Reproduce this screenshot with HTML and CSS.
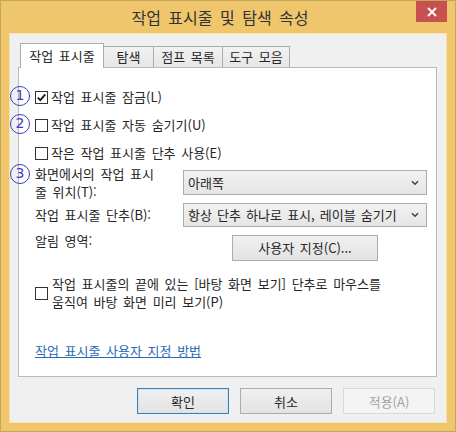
FILE: index.html
```html
<!DOCTYPE html>
<html lang="ko">
<head>
  <meta charset="UTF-8" />
  <title>작업 표시줄 및 탐색 속성</title>
  <link rel="stylesheet" href="styles.css">
</head>
<body>
  <div class="window">
    <div class="titlebar">
      <div class="title">작업 표시줄 및 탐색 속성</div>
      <div class="close">
        <svg width="10" height="10" viewBox="0 0 10 10"><path d="M1 1 L9 9 M9 1 L1 9" stroke="#fff" stroke-width="1.8"/></svg>
      </div>
    </div>

    <div class="client">
      <div class="tabs">
        <div class="tab active t1">작업 표시줄</div>
        <div class="tab t2">탐색</div>
        <div class="tab t3">점프 목록</div>
        <div class="tab t4">도구 모음</div>
      </div>

      <div class="panel">
        <div class="check row1">
          <span class="mark">1</span>
          <span class="box">
            <svg width="11" height="11" viewBox="0 0 11 11"><path d="M1.8 5.6 L4.3 8.2 L9.3 2.4" fill="none" stroke="#1a1a1a" stroke-width="1.9"/></svg>
          </span>
          <span>작업 표시줄 잠금(L)</span>
        </div>
        <div class="check row2">
          <span class="mark">2</span>
          <span class="box"></span>
          <span>작업 표시줄 자동 숨기기(U)</span>
        </div>
        <div class="check row3">
          <span class="box"></span>
          <span>작은 작업 표시줄 단추 사용(E)</span>
        </div>

        <div class="field pos">
          <span class="mark">3</span>
          <div class="label two">화면에서의 작업 표시<br>줄 위치(T):</div>
          <div class="select s1">
            <span class="val">아래쪽</span>
            <svg width="8" height="6" viewBox="0 0 8 6"><path d="M1 1.2 L4 4.2 L7 1.2" fill="none" stroke="#444" stroke-width="1.6"/></svg>
          </div>
        </div>

        <div class="field combine">
          <div class="label">작업 표시줄 단추(B):</div>
          <div class="select s2">
            <span class="val">항상 단추 하나로 표시, 레이블 숨기기</span>
            <svg width="8" height="6" viewBox="0 0 8 6"><path d="M1 1.2 L4 4.2 L7 1.2" fill="none" stroke="#444" stroke-width="1.6"/></svg>
          </div>
        </div>

        <div class="field notify">
          <div class="label">알림 영역:</div>
          <button class="btn custom">사용자 지정(C)...</button>
        </div>

        <div class="check peek">
          <span class="box"></span>
          <span class="text">작업 표시줄의 끝에 있는 [바탕 화면 보기] 단추로 마우스를<br>움직여 바탕 화면 미리 보기(P)</span>
        </div>

        <a class="link" href="#">작업 표시줄 사용자 지정 방법</a>
      </div>

      <div class="buttons">
        <button class="btn default">확인</button>
        <button class="btn">취소</button>
        <button class="btn disabled">적용(A)</button>
      </div>
    </div>
  </div>
</body>
</html>
```

FILE: styles.css
```css
body {
  margin: 0;
  font-family: "Noto Sans CJK KR", "Noto Sans", sans-serif;
  font-size: 13px;
  color: #262626;
  word-spacing: 2px;
}

.window {
  width: 456px;
  height: 432px;
  box-sizing: border-box;
  border: 1px solid #c4a65e;
  background: #efc66b;
  display: flex;
  flex-direction: column;
}

.titlebar {
  height: 32px;
  display: flex;
  align-items: flex-start;
}

.title {
  flex: 1;
  padding-left: 23px;
  text-align: center;
  font-size: 16px;
  line-height: 32px;
  color: #333;
  word-spacing: 3px;
}

.close {
  width: 31px;
  height: 21px;
  margin-right: 8px;
  background: #c75050;
  display: flex;
  align-items: center;
  justify-content: center;
}

.client {
  flex: 1;
  margin: 0 8px 8px;
  border: 1px solid #f8e4ad;
  background: #f0f0f0;
  padding: 9px 9px 0 8px;
  display: flex;
  flex-direction: column;
}

/* tabs */
.tabs {
  height: 24px;
  display: flex;
  align-items: flex-end;
  padding-left: 2px;
}

.tab {
  box-sizing: border-box;
  height: 21px;
  border: 1px solid #acacac;
  border-bottom: none;
  background: linear-gradient(#f2f2f2, #e6e6e6);
  text-align: center;
  line-height: 20px;
  margin-left: -1px;
  white-space: nowrap;
}

.tab.active {
  position: relative;
  z-index: 1;
  height: 25px;
  margin-bottom: -1px;
  background: #fff;
  line-height: 23px;
  margin-left: 0;
}

.t1 { width: 84px; }
.t2 { width: 51px; }
.t3 { width: 70px; }
.t4 { width: 68px; }

.panel {
  height: 310px;
  box-sizing: border-box;
  border: 1px solid #b9b9b9;
  background: #fff;
  padding: 21px 0 0 16px;
  display: flex;
  flex-direction: column;
}

/* rows */
.check {
  position: relative;
  display: flex;
  align-items: center;
  gap: 3px;
  height: 16px;
  line-height: 16px;
}

.row2, .row3 { margin-top: 12px; }

.box {
  box-sizing: border-box;
  width: 13px;
  height: 13px;
  border: 1px solid #333;
  background: #fff;
  display: flex;
  align-items: center;
  justify-content: center;
}

.mark {
  position: absolute;
  left: -25px;
  top: 50%;
  margin-top: -11px;
  box-sizing: border-box;
  width: 20px;
  height: 20px;
  border: 1.5px solid #3d3dc6;
  border-radius: 50%;
  color: #3d3dc6;
  font-family: "DejaVu Sans", sans-serif;
  font-size: 14px;
  line-height: 17px;
  text-align: center;
}

.field {
  position: relative;
  display: grid;
  grid-template-columns: 148px 244px;
  line-height: 16px;
}

.label { white-space: nowrap; }

.label.two { line-height: 18px; }

.pos { margin-top: 4px; }
.pos .mark { top: 0; margin-top: -1px; }
.pos .select { margin-top: 5px; height: 25px; }

.combine { margin-top: 2px; align-items: center; }
.combine .select { height: 24px; }
.s2 .val { word-spacing: 1.5px; }

.notify { margin-top: 6px; }
.notify .btn { margin: 2px 0 0 49px; width: 146px; }

.select {
  box-sizing: border-box;
  border: 1px solid #acacac;
  background: linear-gradient(#f2f2f2, #e5e5e5);
  display: flex;
  align-items: center;
  justify-content: space-between;
  padding: 0 7px 0 4px;
}

.val { white-space: nowrap; }

.btn {
  box-sizing: border-box;
  height: 26px;
  border: 1px solid #acacac;
  background: linear-gradient(#f0f0f0, #e3e3e3);
  font: inherit;
  color: #262626;
  word-spacing: 2px;
  padding: 0;
}

.peek {
  margin-top: 14px;
  height: 36px;
  gap: 4px;
  line-height: 18px;
}

.link {
  margin-top: 32px;
  align-self: flex-start;
  color: #2a6cb3;
  line-height: 16px;
}

.buttons {
  margin: 11px 2px 0 0;
  display: flex;
  justify-content: flex-end;
  gap: 11px;
}

.buttons .btn { width: 92px; }

.btn.default {
  border-color: #3c7fb1;
  box-shadow: inset 0 0 0 1px #cfe3f3;
}

.btn.disabled {
  border-color: #d9d9d9;
  background: #f4f4f4;
  color: #a3a3a3;
}
```
